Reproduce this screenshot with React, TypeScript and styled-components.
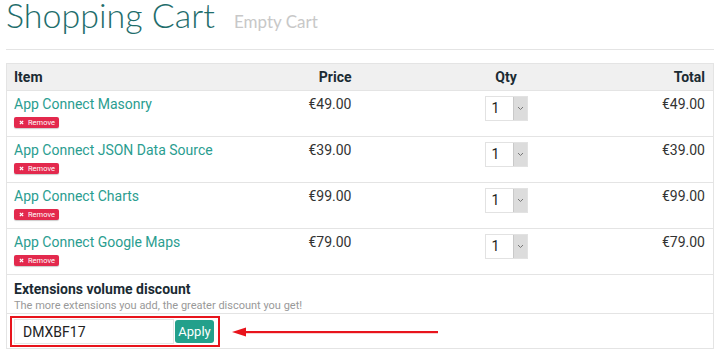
import { createGlobalStyle, styled } from 'styled-components'

const GlobalStyle = createGlobalStyle`
  html, body {
    margin: 0;
    padding: 0;
    background: #fff;
  }
  body {
    font-family: Roboto, "Liberation Sans", sans-serif;
    color: #333;
  }
`

const Page = styled.div`
  padding: 0 6px;
  width: 708px;
`

const Header = styled.div`
  display: flex;
  align-items: baseline;
  gap: 19px;
  height: 50px;
  padding-top: 1px;
  border-bottom: 1px solid #e4e4e4;
  box-sizing: border-box;
`

const Title = styled.h1`
  margin: 0;
  font-family: Lato, "Liberation Sans", sans-serif;
  font-weight: 300;
  font-size: 34px;
  line-height: 28px;
  color: #1f6e6c;
`

const SubTitle = styled.span`
  font-family: Lato, "Liberation Sans", sans-serif;
  font-size: 17px;
  color: #c8c8c8;
`

const Table = styled.table`
  margin-top: 13px;
  width: 708px;
  border-collapse: collapse;
  table-layout: fixed;
  border: 1px solid #e4e4e4;
  font-size: 14px;
`

const Th = styled.th<{ $align?: string }>`
  background: #f0f0f0;
  height: 26px;
  padding: 0 8px 0 7px;
  text-align: ${p => p.$align || 'left'};
  font-weight: 700;
  color: #1b2b33;
  border-bottom: 1px solid #e4e4e4;
`

const Td = styled.td<{ $align?: string }>`
  padding: 5px 8px 8px 7px;
  vertical-align: top;
  text-align: ${p => p.$align || 'left'};
  border-top: 1px solid #e4e4e4;
  color: #333;
  line-height: 17px;
`

const ItemLink = styled.a`
  display: block;
  color: #2a9d90;
  text-decoration: none;
  font-size: 14px;
  line-height: 17px;
`

const RemoveBadge = styled.span`
  display: flex;
  width: fit-content;
  align-items: center;
  gap: 4px;
  margin-top: 4px;
  height: 11px;
  padding: 0 4px 0 5px;
  background: #e3294d;
  color: #fff;
  font-size: 7.5px;
  line-height: 11px;
  border-radius: 2px;
  box-shadow: 0 1px 1px rgba(0, 0, 0, 0.2);
`

const Price = styled.span`
  display: block;
`

const Select = styled.div`
  display: inline-flex;
  vertical-align: top;
  width: 43px;
  height: 25px;
  border: 1px solid #e2e2e2;
  box-sizing: border-box;
  text-align: left;
`

const SelectValue = styled.span`
  flex: 1;
  padding-left: 6px;
  line-height: 23px;
  font-size: 14px;
  color: #222;
`

const SelectArrow = styled.span`
  width: 13px;
  background: #dcdcdc;
  border-left: 1px solid #c9c9c9;
  display: flex;
  align-items: center;
  justify-content: center;
`

const DiscountCell = styled.td`
  padding: 6px 8px 1px 7px;
  border-top: 1px solid #e4e4e4;
`

const DiscountTitle = styled.div`
  font-weight: 700;
  color: #1b2b33;
  font-size: 14px;
  line-height: 17px;
`

const DiscountNote = styled.div`
  font-size: 11px;
  color: #999;
  line-height: 13px;
  margin-top: 1px;
`

const CouponCell = styled.td`
  border-top: 1px solid #e4e4e4;
  padding: 2px 3px 1px;
  vertical-align: top;
  line-height: 0;
`

const CouponRow = styled.div`
  display: flex;
  align-items: center;
`

const CouponBox = styled.div`
  display: flex;
  align-items: center;
  gap: 1px;
  padding: 0 4px 0 2px;
  border: 2px solid #e8141c;
  height: 31px;
  box-sizing: border-box;
  width: 210px;
`

const CouponInput = styled.input`
  width: 160px;
  height: 25px;
  box-sizing: border-box;
  border: 1px solid #e6e6e6;
  padding: 0 8px;
  font-family: Roboto, "Liberation Sans", sans-serif;
  font-size: 14px;
  color: #222;
  outline: none;
`

const ApplyButton = styled.button`
  height: 23px;
  width: 41px;
  padding: 0;
  border: none;
  border-radius: 3px;
  background: #23a08b;
  color: #fff;
  font-family: Roboto, "Liberation Sans", sans-serif;
  font-size: 13px;
  line-height: 23px;
`

const Arrow = styled.svg`
  margin-left: 12px;
  display: block;
`

const items = [
  { name: 'App Connect Masonry', price: '€49.00' },
  { name: 'App Connect JSON Data Source', price: '€39.00' },
  { name: 'App Connect Charts', price: '€99.00' },
  { name: 'App Connect Google Maps', price: '€79.00' },
]

function App() {
  return (
    <Page>
      <GlobalStyle />
      <Header>
        <Title>Shopping Cart</Title>
        <SubTitle>Empty Cart</SubTitle>
      </Header>
      <Table>
        <colgroup>
          <col style={{ width: 230 }} />
          <col style={{ width: 123 }} />
          <col style={{ width: 294 }} />
          <col />
        </colgroup>
        <thead>
          <tr>
            <Th>Item</Th>
            <Th $align="right">Price</Th>
            <Th $align="center">Qty</Th>
            <Th $align="right">Total</Th>
          </tr>
        </thead>
        <tbody>
          {items.map(item => (
            <tr key={item.name}>
              <Td>
                <ItemLink href="#">{item.name}</ItemLink>
                <RemoveBadge>
                  <svg width="5" height="5" viewBox="0 0 6 6">
                    <path d="M1 1L5 5M5 1L1 5" stroke="#fff" strokeWidth="1.5" />
                  </svg>
                  Remove
                </RemoveBadge>
              </Td>
              <Td $align="right">
                <Price>{item.price}</Price>
              </Td>
              <Td $align="center">
                <Select>
                  <SelectValue>1</SelectValue>
                  <SelectArrow>
                    <svg width="7" height="5" viewBox="0 0 7 5">
                      <path d="M1 1L3.5 3.5L6 1" stroke="#777" strokeWidth="1" fill="none" />
                    </svg>
                  </SelectArrow>
                </Select>
              </Td>
              <Td $align="right">
                <Price>{item.price}</Price>
              </Td>
            </tr>
          ))}
          <tr>
            <DiscountCell colSpan={4}>
              <DiscountTitle>Extensions volume discount</DiscountTitle>
              <DiscountNote>The more extensions you add, the greater discount you get!</DiscountNote>
            </DiscountCell>
          </tr>
          <tr>
            <CouponCell colSpan={4}>
              <CouponRow>
                <CouponBox>
                  <CouponInput defaultValue="DMXBF17" />
                  <ApplyButton>Apply</ApplyButton>
                </CouponBox>
                <Arrow width="206" height="10" viewBox="0 0 206 10">
                  <path d="M0 5L14 0.5L14 9.5Z" fill="#e8141c" />
                  <rect x="12" y="4" width="194" height="2.2" fill="#e8141c" />
                </Arrow>
              </CouponRow>
            </CouponCell>
          </tr>
        </tbody>
      </Table>
    </Page>
  )
}

export default App
